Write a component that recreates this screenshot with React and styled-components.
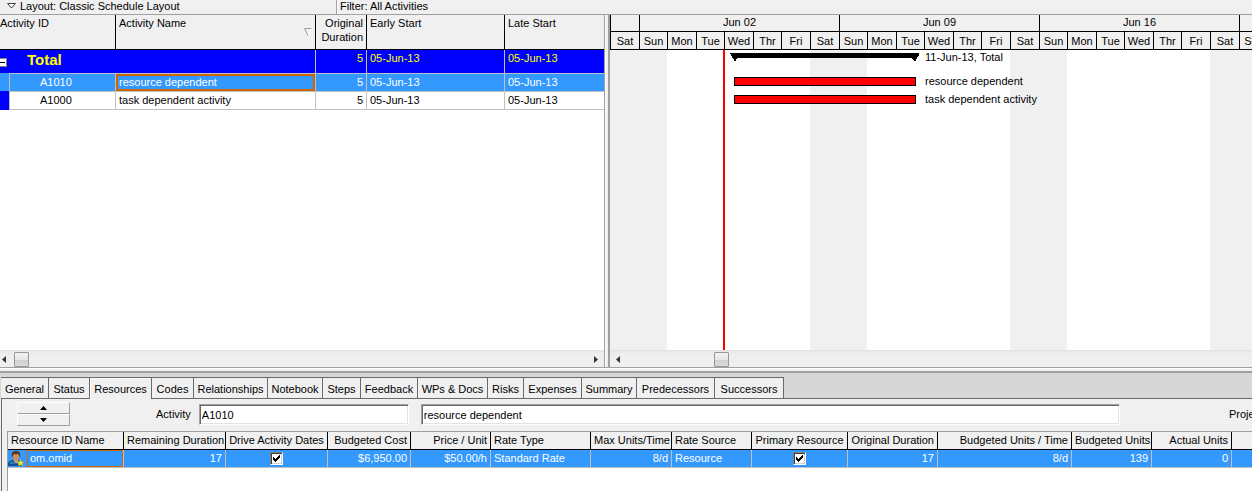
import React, { useState } from 'react'
import styled, { createGlobalStyle, css } from 'styled-components'

const GlobalStyle = createGlobalStyle`
* { box-sizing: border-box; }
body {
  margin: 0;
  background: #f0f0f0;
  color: #000;
  font: 11px/14px "Liberation Sans", Arial, sans-serif;
}
button, input { font: inherit; color: inherit; }
`

const Page = styled.div`
display: flex;
flex-direction: column;
height: 100vh;
min-height: 300px;
overflow: hidden;
white-space: nowrap;
`

/* ---- layout bar ---- */

const LayoutBar = styled.header`
display: flex;
height: 15px;
border-bottom: 1px solid #a0a0a0;
`

const LayoutButton = styled.button`
display: flex;
align-items: center;
gap: 4px;
width: 337px;
padding: 0 0 2px 7px;
border: none;
border-right: 1px solid #a0a0a0;
background: none;
`

const FilterLabel = styled.div`
padding: 0 2px;
line-height: 12px;
border-left: 1px solid #fff;
`

/* ---- schedule: activity table + gantt ---- */

const Schedule = styled.main`
display: grid;
grid-template-columns: minmax(0, 605px) 5px minmax(0, 1fr);
flex: 1;
min-height: 0;
border-bottom: 1px solid #a0a0a0;
`

const Pane = styled.section`
display: flex;
flex-direction: column;
min-width: 0;
overflow: hidden;
`

const TablePane = styled(Pane)`
border-right: 1px solid #a0a0a0;
`

const Splitter = styled.div`
border-left: 1px solid #fff;
border-right: 2px solid #a0a0a0;
`

const TableArea = styled.div`
flex: 1;
overflow: hidden;
background: #fff;
`

const Table = styled.table`
width: 100%;
table-layout: fixed;
border-collapse: separate;
border-spacing: 0;
`

const HeadCell = styled.th`
height: ${p => p.$height}px;
padding: 1px 3px;
${p => p.$flush && 'padding-left: 0;'}
background: #f0f0f0;
border-bottom: 1px solid #000;
border-right: 1px solid #000;
font-weight: normal;
text-align: ${p => p.$align || 'left'};
vertical-align: top;
&:last-child { border-right: none; }
`

const NameHead = styled.span`
display: flex;
justify-content: space-between;
align-items: flex-start;
svg { margin-top: 12px; }
`

const TotalCell = styled.td`
height: 23px;
padding: ${p => p.$title ? 0 : 1}px 3px;
background: #00f;
color: #ff0;
border-right: 1px solid #c0c0c0;
text-align: ${p => p.$align || 'left'};
vertical-align: top;
&:last-child { border-right: none; }
`

const TotalName = styled.div`
display: flex;
align-items: center;
gap: 20px;
margin-left: -3px;
font-size: 15px;
line-height: 20px;
font-weight: bold;
`

const Collapse = styled.button`
width: 7px;
height: 9px;
margin-top: 5px;
padding: 0;
border: 1px solid #808080;
border-left: none;
background: linear-gradient(#000, #000) 0 3px / 5px 1px no-repeat #fff;
`

const Cell = styled.td`
height: 18px;
padding: 0 3px 2px;
border-top: 1px solid #c0c0c0;
border-right: 1px solid #c0c0c0;
text-align: ${p => p.$align || 'left'};
&:last-child { border-right: none; }
`

const IndentCell = styled.td`
padding: 0;
background: #00f;
`

const IdCell = styled(Cell)`
padding-left: 30px;
border-left: 1px solid #c0c0c0;
`

const ActivityRow = styled.tr`
${p => p.$selected && css`
  color: #fff;
  td { background: #39f; }
`}
&:last-child ${Cell}, &:last-child ${IdCell} { height: 19px; border-bottom: 1px solid #c0c0c0; }
`

const FocusCell = styled(Cell)`
${p => p.$focused && css`
  padding: 0;
  div { height: 17px; padding: 0 1px; line-height: 13px; border: 2px solid #c60; }
`}
`

/* ---- scroll bars ---- */

const ScrollBar = styled.div`
display: flex;
align-items: center;
height: 17px;
border-top: 1px solid #e3e3e3;
background: linear-gradient(#e8e8e8, #efefef 30%);
`

const ArrowButton = styled.button`
display: flex;
justify-content: ${p => p.$end ? 'flex-end' : 'flex-start'};
width: ${p => p.$width}px;
padding: 0 6px 0 2px;
border: none;
background: none;
`

const Thumb = styled.div`
width: 15px;
height: 15px;
margin-left: ${p => p.$offset}px;
margin-right: auto;
border: 1px solid #979797;
border-radius: 1px;
background: linear-gradient(#f3f3f3, #e6e6e8 50%, #cfd0d2 50%, #dcdcdc);
`

/* ---- gantt ---- */

const WEEK = '28px 29px 28px 29px 28px 29px 29px'

const Timescale = styled.div`
display: flex;
height: 35px;
border-bottom: 1px solid #000;
text-align: center;
`

const Week = styled.div`
flex: none;
`

const WeekLabel = styled.div`
height: 17px;
border-left: 1px solid #000;
border-bottom: 1px solid #000;
`

const Days = styled.div`
display: grid;
grid-template-columns: ${p => p.$single ? '29px' : WEEK};
`

const Day = styled.div`
height: 17px;
padding-top: 2px;
border-left: 1px solid #000;
`

const Chart = styled.div`
position: relative;
flex: 1;
overflow: hidden;
background: repeating-linear-gradient(90deg, #f0f0f0 0 57px, #fff 57px 200px);
`

const DataDate = styled.div`
position: absolute;
top: 0;
bottom: 0;
left: 113px;
width: 2px;
background: #f00;
`

const BarRow = styled.div`
display: flex;
align-items: flex-start;
height: ${p => p.$summary ? 24 : 18}px;
padding: ${p => p.$summary ? '0 0 0 120px' : '0 0 0 124px'};
gap: ${p => p.$summary ? 6 : 9}px;
svg { margin-top: 3px; }
`

const Bar = styled.div`
width: 182px;
height: 9px;
margin-top: 3px;
border: 1px solid #000;
background: #f00;
`

/* ---- activity details ---- */

const Details = styled.section`
flex: none;
height: 123px;
padding-top: 2px;
display: flex;
flex-direction: column;
border-top: 1px solid #fff;
`

const TabBar = styled.nav`
display: flex;
padding: 4px 0 0 1px;
border-top: 2px solid #a0a0a0;
background: #d7d7d7;
&::after { content: ""; flex: 1; border-bottom: 1px solid #696969; }
`

const Tab = styled.button`
flex: none;
width: ${p => p.$width}px;
height: 22px;
padding: 2px 0 0;
border: 1px solid #696969;
border-left: none;
background: #f0f0f0;
${p => p.$active && css`
  border-bottom: none;
  padding-bottom: 1px;
  box-shadow: inset 1px 1px #fff;
`}
`

const TabPanel = styled.div`
display: flex;
flex-direction: column;
flex: 1;
min-height: 0;
margin-left: 1px;
border-left: 1px solid #696969;
`

const Fields = styled.div`
display: flex;
align-items: flex-start;
padding: 3px 0 5px 15px;
overflow: hidden;
`

const Stepper = styled.div`
width: 53px;
margin-right: 86px;
`

const StepButton = styled.button`
display: flex;
align-items: center;
justify-content: center;
width: 100%;
height: 12px;
padding: 0;
border: 1px solid #a0a0a0;
border-top-color: #fff;
border-left-color: #fff;
background: #f0f0f0;
`

const FieldLabel = styled.label`
margin-top: 5px;
`

const TextBox = styled.input`
width: ${p => p.$width ? p.$width + 'px' : 'auto'};
flex: ${p => p.$width ? 'none' : '1'};
min-width: 0;
height: 21px;
margin: 2px 0 0 ${p => p.$gap}px;
padding: 0 2px;
border: 1px solid #a0a0a0;
border-right-color: #fff;
border-bottom-color: #fff;
outline: none;
background: #fff;
box-shadow: inset 1px 1px #696969, inset -1px -1px #e3e3e3;
`

const ProjectLabel = styled.div`
flex: none;
width: 23px;
margin: 5px 0 0 109px;
`

const ResourceGrid = styled.div`
flex: 1;
overflow: hidden;
margin-left: 5px;
border-top: 1px solid #a0a0a0;
border-left: 1px solid #a0a0a0;
background: #fff;
`

const ResourceHead = styled(HeadCell)`
padding: 1px 3px 0;
`

const ResourceCell = styled.td`
height: 18px;
padding: 0 3px ${p => p.$icon ? 0 : 2}px;
background: #39f;
color: #fff;
border-right: 1px solid #c0c0c0;
border-bottom: 1px solid #c0c0c0;
text-align: ${p => p.$align || 'left'};
&:last-child { border-right: none; }
`

const ResourceName = styled.div`
display: flex;
margin: 0 -3px;
gap: 3px;
span { flex: 1; height: 17px; padding-left: 2px; line-height: 15px; border: 1px solid #c60; }
`

const CheckWrap = styled.label`
position: relative;
display: block;
width: 13px;
height: 13px;
margin: 0 auto;
svg { position: absolute; top: 0; left: 0; pointer-events: none; }
`

const CheckInput = styled.input`
appearance: none;
display: block;
width: 13px;
height: 13px;
margin: 0;
border: 1px solid #808080;
border-right-color: #fff;
border-bottom-color: #fff;
background: #fff;
box-shadow: inset 1px 1px #404040, inset -1px -1px #d4d0c8;
`

const weeks = [
  { label: '', days: ['Sat'] },
  { label: 'Jun 02', days: ['Sun', 'Mon', 'Tue', 'Wed', 'Thr', 'Fri', 'Sat'] },
  { label: 'Jun 09', days: ['Sun', 'Mon', 'Tue', 'Wed', 'Thr', 'Fri', 'Sat'] },
  { label: 'Jun 16', days: ['Sun', 'Mon', 'Tue', 'Wed', 'Thr', 'Fri', 'Sat'] },
  { label: '', days: ['Sun'] },
]

const activities = [
  { id: 'A1010', name: 'resource dependent', duration: 5, early: '05-Jun-13', late: '05-Jun-13' },
  { id: 'A1000', name: 'task dependent activity', duration: 5, early: '05-Jun-13', late: '05-Jun-13' },
]

const tabs = [
  ['General', 48], ['Status', 41], ['Resources', 62], ['Codes', 42], ['Relationships', 74],
  ['Notebook', 55], ['Steps', 38], ['Feedback', 57], ['WPs & Docs', 70], ['Risks', 36],
  ['Expenses', 58], ['Summary', 55], ['Predecessors', 78], ['Successors', 69],
]

const resourceColumns = [
  { title: 'Resource ID Name', width: 116, value: 'om.omid', type: 'name' },
  { title: 'Remaining Duration', width: 102, value: '17', align: 'right' },
  { title: 'Drive Activity Dates', width: 102, type: 'check', align: 'center' },
  { title: 'Budgeted Cost', width: 83, value: '$6,950.00', align: 'right' },
  { title: 'Price / Unit', width: 80, value: '$50.00/h', align: 'right' },
  { title: 'Rate Type', width: 100, value: 'Standard Rate' },
  { title: 'Max Units/Time', width: 81, value: '8/d', align: 'right' },
  { title: 'Rate Source', width: 80, value: 'Resource' },
  { title: 'Primary Resource', width: 96, type: 'check', align: 'center' },
  { title: 'Original Duration', width: 90, value: '17', align: 'right' },
  { title: 'Budgeted Units / Time', width: 134, value: '8/d', align: 'right' },
  { title: 'Budgeted Units', width: 80, value: '139', align: 'right' },
  { title: 'Actual Units', width: 80, value: '0', align: 'right' },
  { title: '' },
]

const Arrow = ({ dir }) => {
  const points = {
    left: '4,0 4,7 0,3.5',
    right: '0,0 0,7 4,3.5',
    up: '0,4 7,4 3.5,0',
    down: '0,0 7,0 3.5,4',
  }
  const flat = dir === 'up' || dir === 'down'
  return (
    <svg width={flat ? 7 : 4} height={flat ? 4 : 7} aria-hidden="true">
      <polygon points={points[dir]} fill={flat ? '#000' : '#333'} />
    </svg>
  )
}

const PersonIcon = () => (
  <svg width="16" height="16" viewBox="0 0 16 16" aria-hidden="true">
    <path d="M0 16v-2.500c0-2 2-3 4.500-3.500h5c2.500.500 4.500 1.500 4.500 3.500V16z" fill="#14508c" />
    <path d="M1 14c.500-2 2-2.500 4-3l2.500 3 2.500-3c1.500.300 3 1 3.500 3z" fill="#2a7cc0" />
    <path d="M6 9h4v2.500L8 13.500l-2-2z" fill="#d09a70" />
    <ellipse cx="8" cy="6.500" rx="3.300" ry="4" fill="#c98e62" />
    <path d="M4 7C3 2.500 5 1 8 1s5 1.500 4 6l-.800-.500c0-1.500-.700-2.500-1.700-2.500-1.500.500-3 .200-3.800 0-.500.800-.700 1.700-.700 2.500z" fill="#5c3a20" />
    <path d="M12.500 9.500l1 2.200 2.500.300-1.800 1.600.500 2.400-2.200-1.200-2.200 1.200.500-2.400L9 12l2.500-.300z" fill="#ffe83a" stroke="#b8b000" strokeWidth=".4" />
  </svg>
)

const CheckBox = ({ label }) => {
  const [checked, setChecked] = useState(true)
  return (
    <CheckWrap>
      <CheckInput type="checkbox" aria-label={label} checked={checked} onChange={() => setChecked(!checked)} />
      {checked && (
        <svg width="13" height="13" aria-hidden="true">
          <path d="M3 5h1v1h1v1h1V6h1V5h1V4h1V3h1v3H9v1H8v1H7v1H6v1H5V9H4V8H3z" fill="#000" />
        </svg>
      )}
    </CheckWrap>
  )
}

const ActivityTable = ({ selected, onSelect }) => (
  <TablePane>
    <TableArea>
      <Table>
        <colgroup>
          <col width="9" />
          <col width="107" />
          <col width="200" />
          <col width="51" />
          <col width="138" />
          <col />
        </colgroup>
        <thead>
          <tr>
            <HeadCell colSpan={2} $height={35} $flush>Activity ID</HeadCell>
            <HeadCell $height={35}>
              <NameHead>
                Activity Name
                <svg width="8" height="8" aria-hidden="true">
                  <path d="M7.500.500L4.500 7.500" stroke="#fff" fill="none" />
                  <path d="M7.500.500H.500L4 7.500" stroke="#a0a0a0" fill="none" />
                </svg>
              </NameHead>
            </HeadCell>
            <HeadCell $height={35} $align="right">Original<br />Duration</HeadCell>
            <HeadCell $height={35}>Early Start</HeadCell>
            <HeadCell $height={35}>Late Start</HeadCell>
          </tr>
        </thead>
        <tbody>
          <tr>
            <TotalCell colSpan={3} $title>
              <TotalName><Collapse aria-label="Collapse Total" />Total</TotalName>
            </TotalCell>
            <TotalCell $align="right">5</TotalCell>
            <TotalCell>05-Jun-13</TotalCell>
            <TotalCell>05-Jun-13</TotalCell>
          </tr>
          {activities.map(a => (
            <ActivityRow key={a.id} $selected={a.id === selected} onClick={() => onSelect(a.id)}>
              <IndentCell />
              <IdCell>{a.id}</IdCell>
              <FocusCell $focused={a.id === selected}><div>{a.name}</div></FocusCell>
              <Cell $align="right">{a.duration}</Cell>
              <Cell>{a.early}</Cell>
              <Cell>{a.late}</Cell>
            </ActivityRow>
          ))}
        </tbody>
      </Table>
    </TableArea>
    <ScrollBar>
      <ArrowButton $width={12} aria-label="Scroll table left"><Arrow dir="left" /></ArrowButton>
      <Thumb $offset={2} />
      <ArrowButton $width={16} $end aria-label="Scroll table right"><Arrow dir="right" /></ArrowButton>
    </ScrollBar>
  </TablePane>
)

const Gantt = () => (
  <Pane>
    <Timescale>
      {weeks.map((week, i) => (
        <Week key={i}>
          <WeekLabel>{week.label}</WeekLabel>
          <Days $single={week.days.length === 1}>
            {week.days.map(day => <Day key={day}>{day}</Day>)}
          </Days>
        </Week>
      ))}
    </Timescale>
    <Chart>
      <DataDate />
      <BarRow $summary>
        <svg width="189" height="9" shapeRendering="crispEdges" aria-hidden="true">
          <path d="M0 0h190l-5 9-3-4H7l-2 4z" />
        </svg>
        <span>11-Jun-13, Total</span>
      </BarRow>
      {activities.map(a => (
        <BarRow key={a.id}>
          <Bar />
          <span>{a.name}</span>
        </BarRow>
      ))}
    </Chart>
    <ScrollBar>
      <ArrowButton $width={16} $end aria-label="Scroll chart left"><Arrow dir="left" /></ArrowButton>
      <Thumb $offset={88} />
    </ScrollBar>
  </Pane>
)

const ResourceTable = () => (
  <ResourceGrid>
    <Table>
      <colgroup>
        {resourceColumns.map((c, i) => <col key={i} width={c.width} />)}
      </colgroup>
      <thead>
        <tr>
          {resourceColumns.map((c, i) => (
            <ResourceHead key={i} $height={18} $align={c.align}>{c.title}</ResourceHead>
          ))}
        </tr>
      </thead>
      <tbody>
        <tr>
          {resourceColumns.map((c, i) => (
            <ResourceCell key={i} $align={c.align} $icon={Boolean(c.type)}>
              {c.type === 'check' && <CheckBox label={c.title} />}
              {c.type === 'name' && <ResourceName><PersonIcon /><span>{c.value}</span></ResourceName>}
              {!c.type && c.value}
            </ResourceCell>
          ))}
        </tr>
      </tbody>
    </Table>
  </ResourceGrid>
)

const App = () => {
  const [selected, setSelected] = useState('A1010')
  const [tab, setTab] = useState('Resources')
  const index = activities.findIndex(a => a.id === selected)
  const activity = activities[index]

  const step = by => {
    const next = activities[index + by]
    if (next) setSelected(next.id)
  }

  return (
    <Page>
      <GlobalStyle />
      <LayoutBar>
        <LayoutButton>
          <svg width="9" height="6" aria-hidden="true">
            <path d="M.500.500h8L4.500 5z" fill="#fff" stroke="#404040" />
          </svg>
          Layout: Classic Schedule Layout
        </LayoutButton>
        <FilterLabel>Filter: All Activities</FilterLabel>
      </LayoutBar>
      <Schedule>
        <ActivityTable selected={selected} onSelect={setSelected} />
        <Splitter />
        <Gantt />
      </Schedule>
      <Details>
        <TabBar>
          {tabs.map(([name, width]) => (
            <Tab key={name} $width={width} $active={name === tab} onClick={() => setTab(name)}>{name}</Tab>
          ))}
        </TabBar>
        <TabPanel>
          <Fields>
            <Stepper>
              <StepButton aria-label="Previous activity" onClick={() => step(-1)}><Arrow dir="up" /></StepButton>
              <StepButton aria-label="Next activity" onClick={() => step(1)}><Arrow dir="down" /></StepButton>
            </Stepper>
            <FieldLabel htmlFor="activity-id">Activity</FieldLabel>
            <TextBox id="activity-id" $width={210} $gap={8} value={activity.id} readOnly />
            <TextBox aria-label="Activity name" $gap={12} value={activity.name} readOnly />
            <ProjectLabel>Project</ProjectLabel>
          </Fields>
          <ResourceTable />
        </TabPanel>
      </Details>
    </Page>
  )
}

export default App
